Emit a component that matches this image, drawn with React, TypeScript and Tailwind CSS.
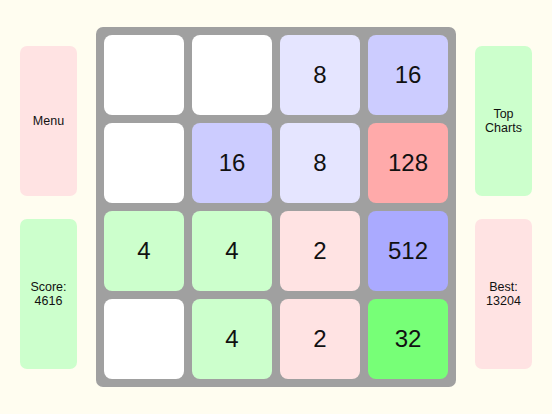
import React from "react";

const tileColors: Record<number, string> = {
  0: "bg-white",
  2: "bg-[#ffe3e3]",
  4: "bg-[#ccffcc]",
  8: "bg-[#e5e5ff]",
  16: "bg-[#ccccff]",
  32: "bg-[#77ff77]",
  128: "bg-[#ffaaaa]",
  512: "bg-[#aaaaff]",
};

const board = [
  [0, 0, 8, 16],
  [0, 16, 8, 128],
  [4, 4, 2, 512],
  [0, 4, 2, 32],
];

function SideButton({ bg, children }: { bg: string; children: React.ReactNode }) {
  return (
    <div className={`w-[57px] h-[150px] rounded-[7px] flex items-center justify-center text-center text-[12.5px] leading-[14px] text-[#111] ${bg}`}>
      {children}
    </div>
  );
}

export default function App() {
  return (
    <div className="w-[552px] h-[414px] bg-[#fffdf0] flex items-center justify-center gap-[19px] font-['Liberation_Sans',Arial,sans-serif]">
      <div className="flex flex-col gap-[23px]">
        <SideButton bg="bg-[#ffe3e3]">Menu</SideButton>
        <SideButton bg="bg-[#ccffcc]">
          Score:
          <br />
          4616
        </SideButton>
      </div>

      <div className="w-[360px] h-[360px] bg-[#a0a0a0] rounded-[7px] p-2 grid grid-cols-4 gap-2">
        {board.flat().map((v, i) => (
          <div key={i} className={`w-20 h-20 rounded-[8px] flex items-center justify-center text-[24px] text-[#111] ${tileColors[v]}`}>
            {v > 0 ? v : ""}
          </div>
        ))}
      </div>

      <div className="flex flex-col gap-[23px]">
        <SideButton bg="bg-[#ccffcc]">
          Top
          <br />
          Charts
        </SideButton>
        <SideButton bg="bg-[#ffe3e3]">
          Best:
          <br />
          13204
        </SideButton>
      </div>
    </div>
  );
}
